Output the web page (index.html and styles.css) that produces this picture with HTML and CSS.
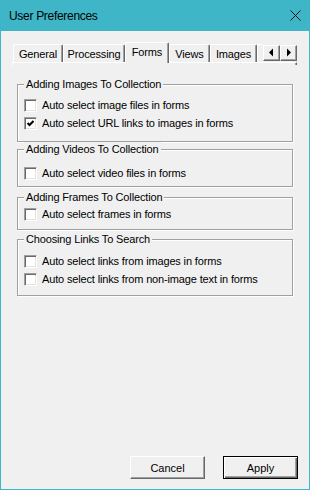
FILE: index.html
```html
<!DOCTYPE html>
<html lang="en">
<head>
    <meta charset="UTF-8">
    <title>User Preferences</title>
    <link rel="stylesheet" href="styles.css">
</head>
<body>
    <div class="window">
        <div class="titlebar">
            <span class="title">User Preferences</span>
            <svg class="close" width="11" height="11" viewBox="0 0 11 11">
                <path d="M0.5 0.5L10.5 10.5M10.5 0.5L0.5 10.5" stroke="#111" stroke-width="1" fill="none"/>
            </svg>
        </div>

        <div class="content">
            <div class="tabstrip">
                <div class="tabs">
                    <div class="tab tab-general">General</div>
                    <div class="tab tab-processing">Processing</div>
                    <div class="tab tab-forms selected">Forms</div>
                    <div class="tab tab-views">Views</div>
                    <div class="tab tab-images">Images</div>
                    <div class="tab tab-partial"></div>
                    <div class="spin">
                        <div class="spin-btn">
                            <svg width="15" height="14" viewBox="0 0 15 14"><polygon points="5,6.5 9,2.5 9,10.5" fill="#000"/></svg>
                        </div>
                        <div class="spin-btn">
                            <svg width="15" height="14" viewBox="0 0 15 14"><polygon points="6,2.5 10,6.5 6,10.5" fill="#000"/></svg>
                        </div>
                    </div>
                </div>
                <div class="pane"></div>
            </div>

            <fieldset class="group group-images">
                <legend>Adding Images To Collection</legend>
                <div class="check-row">
                    <span class="checkbox"></span>
                    <span class="check-label">Auto select image files in forms</span>
                </div>
                <div class="check-row">
                    <span class="checkbox">
                        <svg width="11" height="11" viewBox="0 0 11 11"><path d="M2.5 5l2 2 4-4" stroke="#000" stroke-width="2" fill="none"/></svg>
                    </span>
                    <span class="check-label">Auto select URL links to images in forms</span>
                </div>
            </fieldset>

            <fieldset class="group group-videos">
                <legend>Adding Videos To Collection</legend>
                <div class="check-row">
                    <span class="checkbox"></span>
                    <span class="check-label">Auto select video files in forms</span>
                </div>
            </fieldset>

            <fieldset class="group group-frames">
                <legend>Adding Frames To Collection</legend>
                <div class="check-row">
                    <span class="checkbox"></span>
                    <span class="check-label">Auto select frames in forms</span>
                </div>
            </fieldset>

            <fieldset class="group group-links">
                <legend>Choosing Links To Search</legend>
                <div class="check-row">
                    <span class="checkbox"></span>
                    <span class="check-label">Auto select links from images in forms</span>
                </div>
                <div class="check-row">
                    <span class="checkbox"></span>
                    <span class="check-label">Auto select links from non-image text in forms</span>
                </div>
            </fieldset>

            <div class="buttons">
                <button class="btn">Cancel</button>
                <button class="btn btn-default">Apply</button>
            </div>
        </div>
    </div>
</body>
</html>
```

FILE: styles.css
```css
:root {
    --accent: #3fb6c8;
    --face: #f0f0f0;
    --light: #ffffff;
    --shadow: #a0a0a0;
    --dark-shadow: #696969;
}

body {
    margin: 0;
    font-family: "Liberation Sans", Arial, sans-serif;
    font-size: 11px;
    letter-spacing: -0.15px;
    color: #000;
    background: var(--face);
}

.window {
    width: 310px;
    height: 490px;
    box-sizing: border-box;
    border: 1px solid var(--accent);
    border-top: 0;
    display: flex;
    flex-direction: column;
    background: var(--face);
}

.titlebar {
    height: 31px;
    flex-shrink: 0;
    background: var(--accent);
    display: flex;
    align-items: center;
    justify-content: space-between;
    padding: 0 8px;
}

.title {
    font-size: 12px;
    letter-spacing: -0.3px;
}

.content {
    flex: 1;
    display: flex;
    flex-direction: column;
}

/* Tab strip */
.tabstrip {
    margin: 11px 12px 0 11px;
}

.tabs {
    display: flex;
    align-items: flex-end;
    height: 20px;
    padding-left: 1px;
}

.tab {
    height: 18px;
    box-sizing: border-box;
    border: 1px solid;
    border-color: var(--light) var(--dark-shadow) transparent var(--light);
    border-bottom: 0;
    border-radius: 2px 2px 0 0;
    box-shadow: inset -1px 0 var(--shadow);
    display: flex;
    align-items: center;
    justify-content: center;
    background: var(--face);
}

.tab.selected {
    height: 21px;
    margin-bottom: -1px;
    padding-bottom: 3px;
    position: relative;
    z-index: 1;
}

.tab-general { width: 50px; }
.tab-processing { width: 62px; }
.tab-forms { width: 44px; }
.tab-views { width: 41px; }
.tab-images { width: 47px; }

.tab-partial {
    width: 6px;
    border-right: 0;
    box-shadow: none;
}

.spin {
    display: flex;
    margin-bottom: 1px;
}

.spin-btn {
    width: 17px;
    height: 16px;
    box-sizing: border-box;
    border: 1px solid;
    border-color: var(--light) var(--dark-shadow) var(--dark-shadow) var(--light);
    box-shadow: inset -1px -1px var(--shadow);
    background: var(--face);
}

.spin-btn svg {
    display: block;
}

.pane {
    height: 2px;
    border-top: 1px solid var(--light);
    border-left: 1px solid var(--light);
    border-right: 1px solid var(--dark-shadow);
    box-shadow: inset -1px 0 var(--shadow);
}

/* Group boxes */
.group {
    margin: 0 16px;
    padding: 5px 6px 9px;
    border: 1px solid var(--shadow);
    box-shadow: 1px 1px 0 var(--light), inset 1px 1px 0 var(--light);
    min-inline-size: 0;
}

.group legend {
    padding: 0 2px;
    line-height: 14px;
    background: var(--face);
}

.group-images { margin-top: 12px; padding: 5px 6px 9px; }
.group-videos { padding: 8px 6px 4px; }
.group-frames { margin-top: 3px; padding: 1px 6px 6px; }
.group-links { margin-top: 2px; padding: 6px 6px 7px; }

.check-row {
    display: flex;
    align-items: flex-start;
    height: 18px;
}

.checkbox {
    width: 13px;
    height: 13px;
    margin-top: 3px;
    box-sizing: border-box;
    border: 1px solid;
    border-color: var(--shadow) var(--light) var(--light) var(--shadow);
    box-shadow: inset 1px 1px var(--dark-shadow), inset -1px -1px #e3e3e3;
    background: #fff;
    flex-shrink: 0;
}

.checkbox svg {
    display: block;
}

.check-label {
    margin-left: 5px;
    line-height: 18px;
    white-space: nowrap;
}

/* Dialog buttons */
.buttons {
    margin-top: auto;
    display: flex;
    justify-content: flex-end;
    gap: 18px;
    padding: 0 11px 10px 0;
}

.btn {
    width: 75px;
    height: 23px;
    padding: 0;
    font: inherit;
    color: #000;
    background: var(--face);
    border: 1px solid;
    border-color: var(--light) var(--dark-shadow) var(--dark-shadow) var(--light);
    box-shadow: inset -1px -1px var(--shadow);
}

.btn-default {
    border-color: #000;
    box-shadow: inset 1px 1px var(--light), inset -1px -1px var(--dark-shadow), inset -2px -2px var(--shadow);
}
```
